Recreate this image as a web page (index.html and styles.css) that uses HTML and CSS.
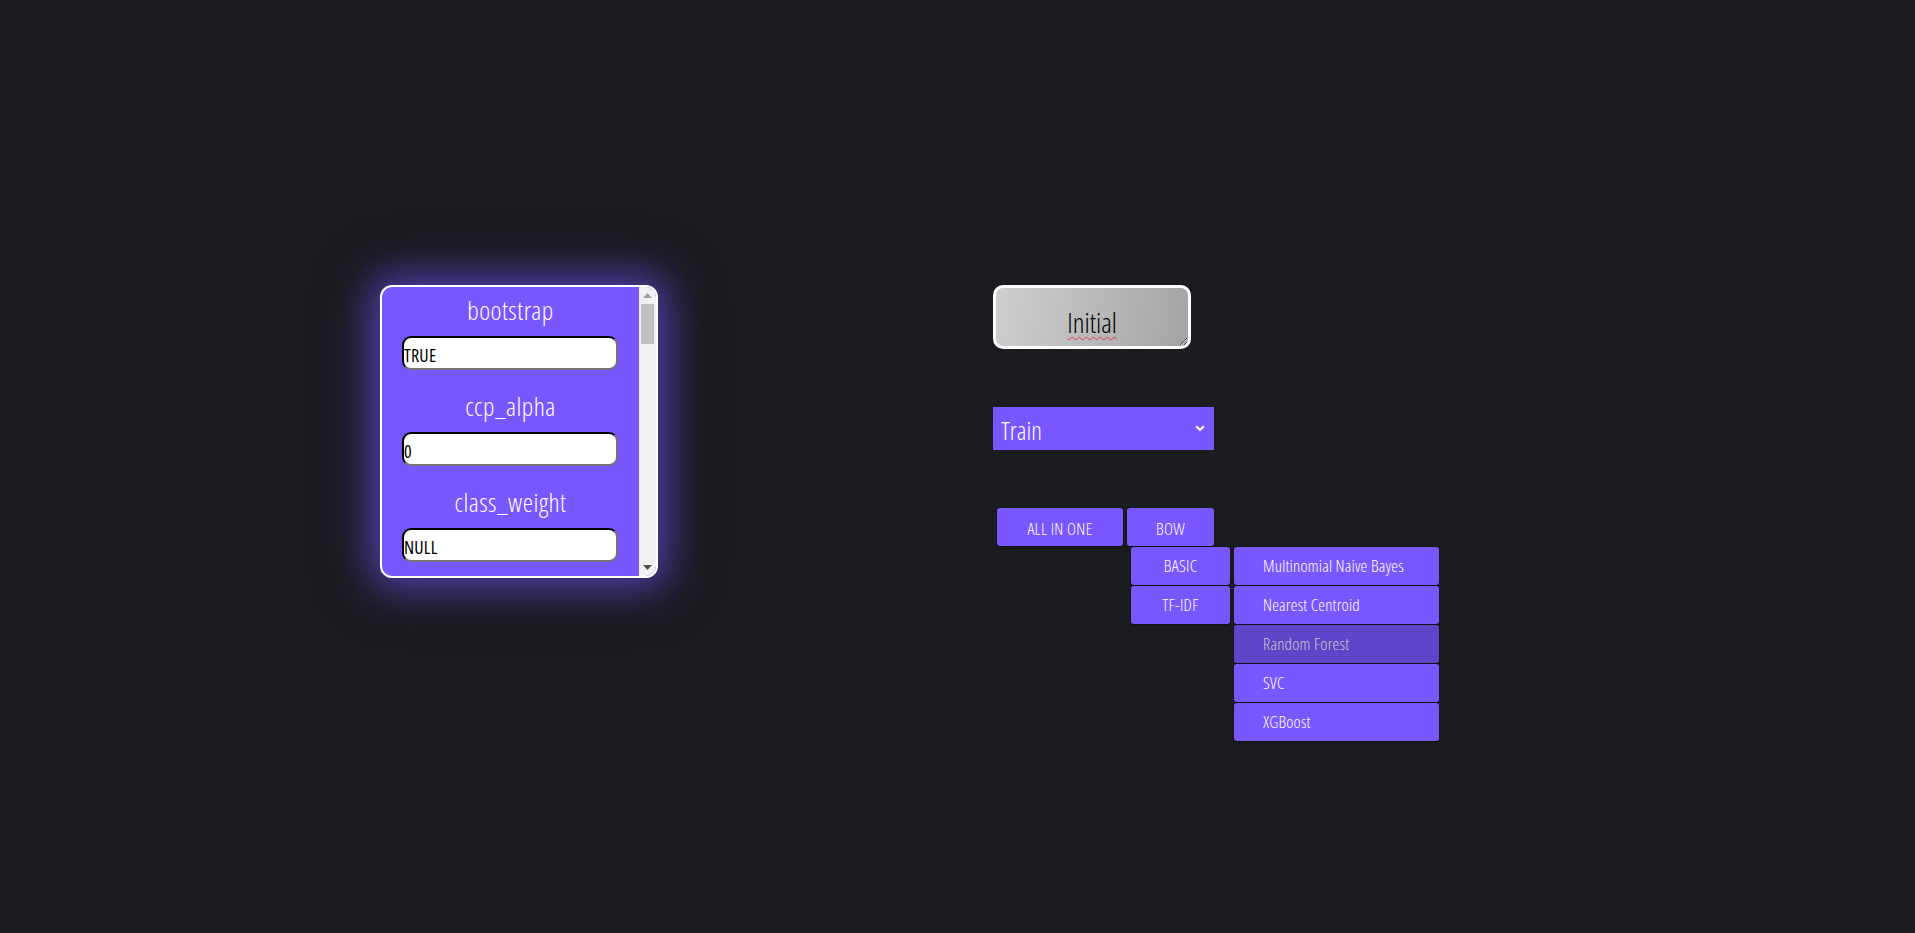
FILE: index.html
```html
<!DOCTYPE html>
<html lang="en">
<head>
<meta charset="utf-8">
<title>Model trainer</title>
<link rel="stylesheet" href="styles.css">
</head>
<body>
<main class="page">
  <section class="params">
    <div class="params-list">
      <div class="field">
        <label class="field-label">bootstrap</label>
        <input class="field-input" type="text" value="TRUE">
      </div>
      <div class="field">
        <label class="field-label">ccp_alpha</label>
        <input class="field-input" type="text" value="0">
      </div>
      <div class="field">
        <label class="field-label">class_weight</label>
        <input class="field-input" type="text" value="NULL">
      </div>
      <div class="field">
        <label class="field-label">criterion</label>
        <input class="field-input" type="text" value="gini">
      </div>
      <div class="field">
        <label class="field-label">max_depth</label>
        <input class="field-input" type="text" value="NULL">
      </div>
    </div>
    <div class="scrollbar" aria-hidden="true">
      <div class="sb-btn"><svg width="9" height="5" viewBox="0 0 9 5"><path d="M0 5 L4.5 0 L9 5 Z" fill="#a3a3a3"/></svg></div>
      <div class="sb-track"><div class="sb-thumb"></div></div>
      <div class="sb-btn"><svg width="9" height="5" viewBox="0 0 9 5"><path d="M0 0 L9 0 L4.5 5 Z" fill="#505050"/></svg></div>
    </div>
  </section>

  <section class="controls">
    <textarea class="status">Initial</textarea>

    <div class="select-wrap">
      <select class="mode">
        <option>Train</option>
        <option>Test</option>
      </select>
      <svg class="chevron" width="10" height="7" viewBox="0 0 10 7"><path d="M1.2 1.2 L5 5 L8.8 1.2" fill="none" stroke="#fff" stroke-width="2.2"/></svg>
    </div>

    <div class="menu-row">
      <button class="btn btn-wide">ALL IN ONE</button>
      <div class="bow">
        <button class="btn btn-bow">BOW</button>
        <div class="submenu">
          <div class="sub-item has-models">
            BASIC
            <div class="models">
              <div class="model">Multinomial Naive Bayes</div>
              <div class="model">Nearest Centroid</div>
              <div class="model active">Random Forest</div>
              <div class="model">SVC</div>
              <div class="model">XGBoost</div>
            </div>
          </div>
          <div class="sub-item">TF-IDF</div>
        </div>
      </div>
    </div>
  </section>
</main>
</body>
</html>
```

FILE: styles.css
```css
html, body {
  margin: 0;
  padding: 0;
  background: #1b1c20;
  height: 100%;
}

body {
  font-family: "Open Sans", "Noto Sans", "DejaVu Sans Condensed", sans-serif;
  font-stretch: 75%;
  font-weight: 300;
  color: #fff;
}

.page {
  display: flex;
  align-items: flex-start;
  padding: 285px 0 0 380px;
  gap: 335px;
}

.params {
  box-sizing: border-box;
  width: 278px;
  height: 293px;
  display: flex;
  border: 2px solid #fff;
  border-radius: 12px;
  background: #7857ff;
  overflow: hidden;
  box-shadow: 0 0 40px 12px rgba(120, 87, 255, 0.62), 0 0 50px 28px rgba(0, 0, 0, 0.22);
}

.params-list {
  flex: 1;
  overflow-y: auto;
  scrollbar-width: none;
  padding-top: 10px;
}

.scrollbar {
  width: 17px;
  flex: none;
  display: flex;
  flex-direction: column;
  background: #f1f1f1;
}

.sb-btn {
  height: 17px;
  display: flex;
  align-items: center;
  justify-content: center;
}

.sb-track {
  flex: 1;
  padding: 0 2px;
}

.sb-thumb {
  height: 40px;
  background: #c1c1c1;
}

.field {
  display: flex;
  flex-direction: column;
  align-items: center;
  gap: 13px;
  padding-bottom: 23px;
}

.field-label {
  font-size: 26px;
  line-height: 26px;
  font-weight: 300;
  letter-spacing: 0.5px;
  color: #fff;
}

.field-input {
  box-sizing: border-box;
  width: 216px;
  height: 34px;
  margin-left: -1px;
  padding: 4px 0 0 0;
  border: 2px inset #767676;
  border-top-color: #1e1e1e;
  border-left-color: #1e1e1e;
  border-radius: 9px;
  background: #fff;
  font-family: inherit;
  font-stretch: 75%;
  font-weight: 400;
  font-size: 18px;
  letter-spacing: 0.2px;
  color: #000;
}

.controls {
  display: flex;
  flex-direction: column;
  align-items: flex-start;
}

.status {
  box-sizing: border-box;
  width: 198px;
  height: 64px;
  border: 3px solid #fff;
  border-radius: 10px;
  background: linear-gradient(100deg, #cfcfcf 0%, #a4a4a4 100%);
  padding: 21px 0 0 0;
  font-family: inherit;
  font-stretch: 75%;
  font-weight: 300;
  font-size: 27.5px;
  line-height: 28px;
  text-align: center;
  color: #000;
  text-decoration: underline wavy #e0404a;
  text-decoration-thickness: 1px;
  text-underline-offset: 3px;
  resize: both;
  overflow: hidden;
}

.select-wrap {
  position: relative;
  margin-top: 58px;
}

.mode {
  appearance: none;
  -webkit-appearance: none;
  width: 221px;
  height: 43px;
  border: none;
  border-radius: 0;
  background: #7857ff;
  color: #fff;
  font-family: inherit;
  font-stretch: 75%;
  font-weight: 300;
  font-size: 25px;
  padding: 2px 0 0 8px;
}

.chevron {
  position: absolute;
  right: 9px;
  top: 18px;
  pointer-events: none;
}

.menu-row {
  display: flex;
  gap: 4px;
  margin-top: 58px;
  margin-left: 4px;
}

.btn {
  height: 38px;
  border: none;
  border-radius: 3px;
  background: #7857ff;
  color: #fff;
  font-family: inherit;
  font-stretch: 75%;
  font-weight: 300;
  font-size: 17px;
  letter-spacing: 0.3px;
  box-shadow: 0 1px 2px rgba(0, 0, 0, 0.5);
  padding: 2px 0 0 0;
}

.btn-wide { width: 126px; }
.btn-bow { width: 87px; }

.bow {
  position: relative;
}

.submenu {
  position: absolute;
  top: 39px;
  left: 4px;
  width: 99px;
  display: flex;
  flex-direction: column;
  gap: 1px;
}

.sub-item {
  position: relative;
  height: 38px;
  line-height: 38px;
  text-align: center;
  background: #7857ff;
  border-radius: 3px;
  font-size: 17px;
  letter-spacing: 0.3px;
  box-shadow: 0 1px 2px rgba(0, 0, 0, 0.45);
}

.models {
  position: absolute;
  top: 0;
  left: 103px;
  width: 205px;
  display: flex;
  flex-direction: column;
  gap: 1px;
  text-align: left;
  letter-spacing: 0.2px;
}

.model {
  height: 38px;
  line-height: 38px;
  padding-left: 29px;
  background: #7857ff;
  border-radius: 3px;
  font-size: 17px;
  white-space: nowrap;
  box-shadow: 0 1px 2px rgba(0, 0, 0, 0.45);
}

.model.active {
  background: #5e45c9;
  color: #c9c9c6;
}
```
